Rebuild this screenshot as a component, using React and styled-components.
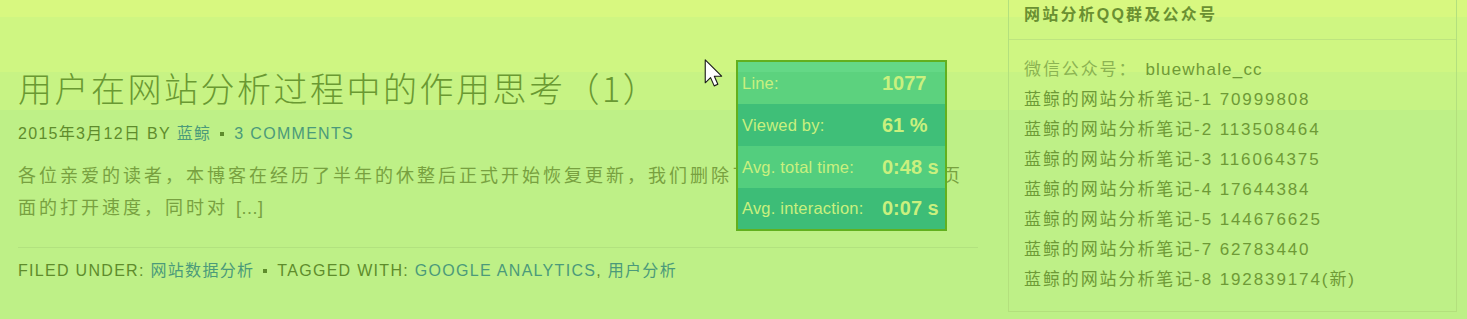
import React from "react";
import styled, { createGlobalStyle } from "styled-components";

const GlobalStyle = createGlobalStyle`
  html, body {
    margin: 0;
    padding: 0;
  }
  body {
    width: 1467px;
    height: 319px;
    overflow: hidden;
    font-family: "Liberation Sans", "Noto Sans CJK SC", sans-serif;
    background: linear-gradient(
      to bottom,
      #d8f880 0px, #d8f880 17px,
      #cff682 17px, #cff682 72px,
      #c7f384 72px, #c7f384 110px,
      #bef087 110px, #bef087 100%
    );
  }
`;

const Page = styled.div`
  position: relative;
  height: 319px;
  display: flex;
  align-items: flex-start;
  padding-left: 18px;
  gap: 30px;
`;

const Main = styled.main`
  width: 960px;
  padding-top: 67px;
  display: flex;
  flex-direction: column;
`;

const Title = styled.h1`
  margin: 0;
  font-family: "Noto Sans CJK SC", sans-serif;
  font-weight: 300;
  font-size: 34px;
  line-height: 42px;
  letter-spacing: 2.5px;
  color: #6a9932;
  white-space: nowrap;
`;

const Meta = styled.div`
  margin-top: 15px;
  font-family: "Liberation Sans", "Noto Sans CJK SC", sans-serif;
  font-size: 16px;
  line-height: 20px;
  letter-spacing: 1.3px;
  text-transform: uppercase;
  color: #5e8c2c;
  display: flex;
  align-items: center;
  white-space: nowrap;
`;

const Link = styled.span`
  color: #4b9a7a;
`;

const Sep = styled.span`
  display: inline-block;
  width: 4px;
  height: 4px;
  background: #5e8c2c;
  margin: 0 10px 0 9px;
`;

const Excerpt = styled.p`
  margin: 16px 0 0;
  height: 64px;
  font-family: "Liberation Sans", "Noto Sans CJK SC", sans-serif;
  font-size: 18px;
  line-height: 32px;
  letter-spacing: 3px;
  color: #78a140;
`;

const More = styled.span`
  letter-spacing: 0.5px;
`;

const Rule = styled.hr`
  margin: 23px 0 0;
  border: 0;
  height: 1px;
  background: #b2e27f;
`;

const Footer = styled.div`
  margin-top: 13px;
  font-size: 16px;
  line-height: 20px;
  letter-spacing: 1.3px;
  color: #5e8c2c;
  display: flex;
  align-items: center;
  white-space: nowrap;
`;

const Sidebar = styled.aside`
  width: 447px;
  border: 1px solid #b3e07d;
  border-top: 0;
  display: flex;
  flex-direction: column;
`;

const WidgetTitle = styled.h4`
  margin: 0;
  padding: 5px 15px 14px;
  border-bottom: 1px solid #bde57f;
  font-family: "Liberation Sans", "Noto Sans CJK SC", sans-serif;
  font-weight: 700;
  font-size: 16px;
  line-height: 20px;
  letter-spacing: 2.2px;
  color: #6a9032;
`;

const WidgetBody = styled.div`
  padding: 15px 15px 16px;
  display: flex;
  flex-direction: column;
`;

const Line = styled.div`
  font-family: "Liberation Sans", "Noto Sans CJK SC", sans-serif;
  font-size: 17px;
  line-height: 30px;
  letter-spacing: 1.9px;
  color: ${(p) => (p.$light ? "#8bb352" : "#6e9a36")};
  white-space: nowrap;
`;

const Strong = styled.span`
  color: #6e9a36;
  letter-spacing: 1.2px;
  margin-left: 8px;
`;

const Tooltip = styled.div`
  position: absolute;
  left: 736px;
  top: 60px;
  width: 207px;
  border: 2px solid #62b01e;
  display: flex;
  flex-direction: column;
  font-family: "Liberation Sans", sans-serif;
  color: #c9f07e;
`;

const TipRow = styled.div`
  height: ${(p) => p.$h}px;
  display: grid;
  grid-template-columns: 140px 1fr;
  align-items: center;
  padding-left: 4px;
  background: ${(p) => p.$bg};
`;

const TipLabel = styled.span`
  font-size: 16.5px;
  letter-spacing: 0.2px;
  white-space: nowrap;
`;

const TipValue = styled.span`
  font-size: 20px;
  font-weight: 700;
`;

const Cursor = styled.svg`
  position: absolute;
  left: 704px;
  top: 59px;
`;

const tipRows = [
  ["Line:", "1077", 42, "linear-gradient(#64d886 0 10px, #5cd27e 10px)"],
  ["Viewed by:", "61 %", 42, "#3fbf78"],
  ["Avg. total time:", "0:48 s", 42, "#53ce7e"],
  ["Avg. interaction:", "0:07 s", 41, "#3dbd77"],
];

const groups = [
  "蓝鲸的网站分析笔记-1 70999808",
  "蓝鲸的网站分析笔记-2 113508464",
  "蓝鲸的网站分析笔记-3 116064375",
  "蓝鲸的网站分析笔记-4 17644384",
  "蓝鲸的网站分析笔记-5 144676625",
  "蓝鲸的网站分析笔记-7 62783440",
  "蓝鲸的网站分析笔记-8 192839174(新)",
];

export default function App() {
  return (
    <>
      <GlobalStyle />
      <Page>
        <Main>
          <Title>用户在网站分析过程中的作用思考（1）</Title>
          <Meta>
            2015年3月12日 BY&nbsp;<Link>蓝鲸</Link>
            <Sep />
            <Link>3 COMMENTS</Link>
          </Meta>
          <Excerpt>
            各位亲爱的读者，本博客在经历了半年的休整后正式开始恢复更新，我们删除了一些无用插件，提升页面的打开速度，同时对 <More>[...]</More>
          </Excerpt>
          <Rule />
          <Footer>
            FILED UNDER:&nbsp;<Link>网站数据分析</Link>
            <Sep />
            TAGGED WITH:&nbsp;<Link>GOOGLE ANALYTICS</Link>,&nbsp;<Link>用户分析</Link>
          </Footer>
        </Main>
        <Sidebar>
          <WidgetTitle>网站分析QQ群及公众号</WidgetTitle>
          <WidgetBody>
            <Line $light>
              微信公众号：<Strong>bluewhale_cc</Strong>
            </Line>
            {groups.map((g) => (
              <Line key={g}>{g}</Line>
            ))}
          </WidgetBody>
        </Sidebar>
        <Tooltip>
          {tipRows.map(([label, value, h, bg]) => (
            <TipRow key={label} $bg={bg} $h={h}>
              <TipLabel>{label}</TipLabel>
              <TipValue>{value}</TipValue>
            </TipRow>
          ))}
        </Tooltip>
        <Cursor width="19" height="28" viewBox="0 0 13 20">
          <path
            d="M0.6 0.6 L0.6 17 L4.4 13.3 L7 19.2 L9.6 18.1 L7.1 12.3 L12.3 12.3 Z"
            fill="#ffffff"
            stroke="#1a1a1a"
            strokeWidth="0.8"
            strokeLinejoin="round"
          />
        </Cursor>
      </Page>
    </>
  );
}
